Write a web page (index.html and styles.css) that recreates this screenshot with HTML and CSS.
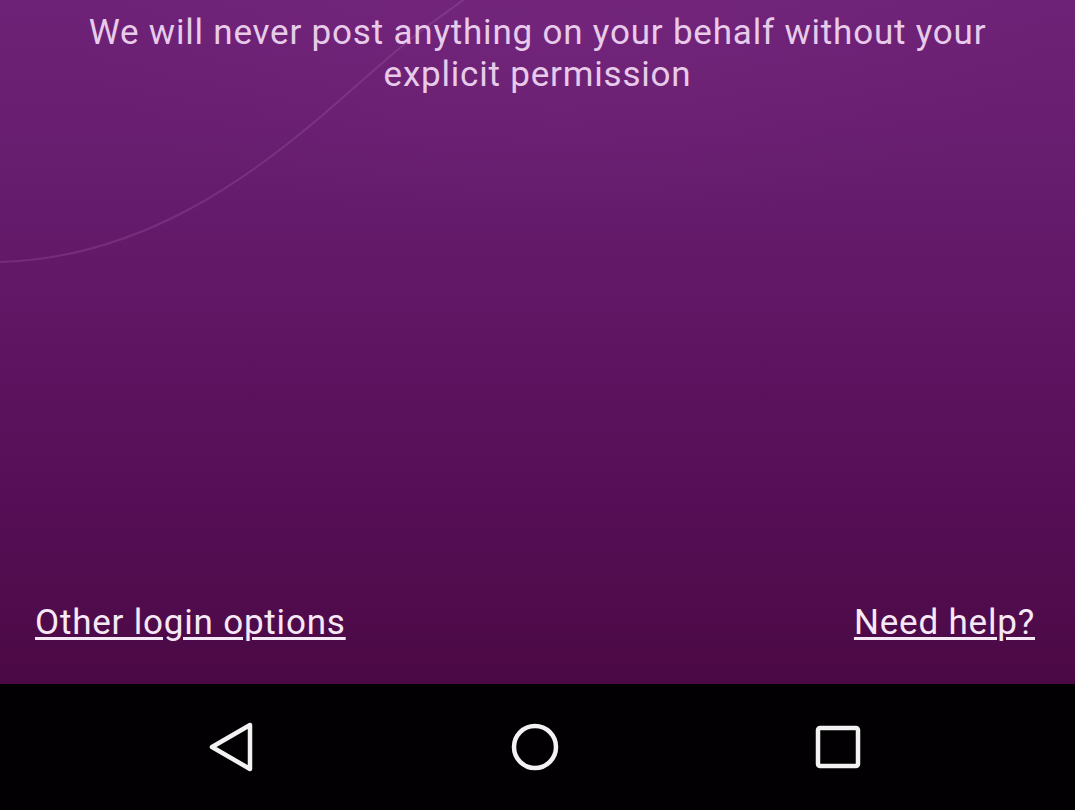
FILE: index.html
```html
<!DOCTYPE html>
<html>
<head>
<meta charset="utf-8">
<link rel="stylesheet" href="styles.css">
</head>
<body>
<div class="screen">
  <main class="content">
    <svg class="swoosh" width="1075" height="684" viewBox="0 0 1075 684">
      <path d="M0 262 C 140 258, 250 180, 340 100 S 430 25, 470 -5" fill="none" stroke="rgba(215,150,220,0.16)" stroke-width="2"/>
    </svg>
    <p class="notice">We will never post anything on your behalf without your<br>explicit permission</p>
    <div class="links">
      <a class="link" href="#">Other login options</a>
      <a class="link" href="#">Need help?</a>
    </div>
  </main>
  <nav class="navbar">
    <div class="navbtn">
      <svg width="48" height="52" viewBox="0 0 48 52"><path d="M4 26 L42 4 L42 48 Z" fill="none" stroke="#f2f2f2" stroke-width="4.5" stroke-linejoin="round"/></svg>
    </div>
    <div class="navbtn">
      <svg width="52" height="52" viewBox="0 0 52 52"><circle cx="26" cy="26" r="21" fill="none" stroke="#f2f2f2" stroke-width="4.5"/></svg>
    </div>
    <div class="navbtn">
      <svg width="48" height="48" viewBox="0 0 48 48"><rect x="4" y="5" width="40" height="38" rx="2" fill="none" stroke="#f2f2f2" stroke-width="4.5"/></svg>
    </div>
  </nav>
</div>
</body>
</html>
```
FILE: styles.css
```css
* { box-sizing: border-box; }
html, body { margin: 0; padding: 0; background: #000; }
body { font-family: Roboto, "Noto Sans", sans-serif; }
.screen {
  width: 1075px;
  height: 810px;
  display: flex;
  flex-direction: column;
  overflow: hidden;
}
.content {
  position: relative;
  height: 684px;
  display: flex;
  flex-direction: column;
  justify-content: space-between;
  background:
    radial-gradient(ellipse 700px 260px at 560px 40px, rgba(130,50,140,0.22), rgba(130,50,140,0) 70%),
    linear-gradient(to bottom, #6e2277 0%, #671d6e 25%, #5d135f 55%, #530d52 80%, #4b0944 100%);
}
.swoosh {
  position: absolute;
  left: 0;
  top: 0;
  pointer-events: none;
}
.notice {
  position: relative;
  margin: 0;
  padding-top: 12px;
  text-align: center;
  font-size: 35px;
  line-height: 42px;
  color: #e8cbea;
  letter-spacing: 0.8px;
}
.links {
  display: flex;
  justify-content: space-between;
  align-items: flex-end;
  padding: 0 40px 41px 35px;
}
.link {
  font-size: 35px;
  line-height: 40px;
  color: #f7e8f7;
  text-decoration: underline;
  text-decoration-thickness: 3px;
  text-underline-offset: 3px;
  letter-spacing: 0.8px;
}
.navbar {
  height: 126px;
  background: #020002;
  display: flex;
  justify-content: center;
  align-items: center;
  padding-right: 5px;
}
.navbtn {
  width: 303px;
  display: flex;
  justify-content: center;
  align-items: center;
}
```
